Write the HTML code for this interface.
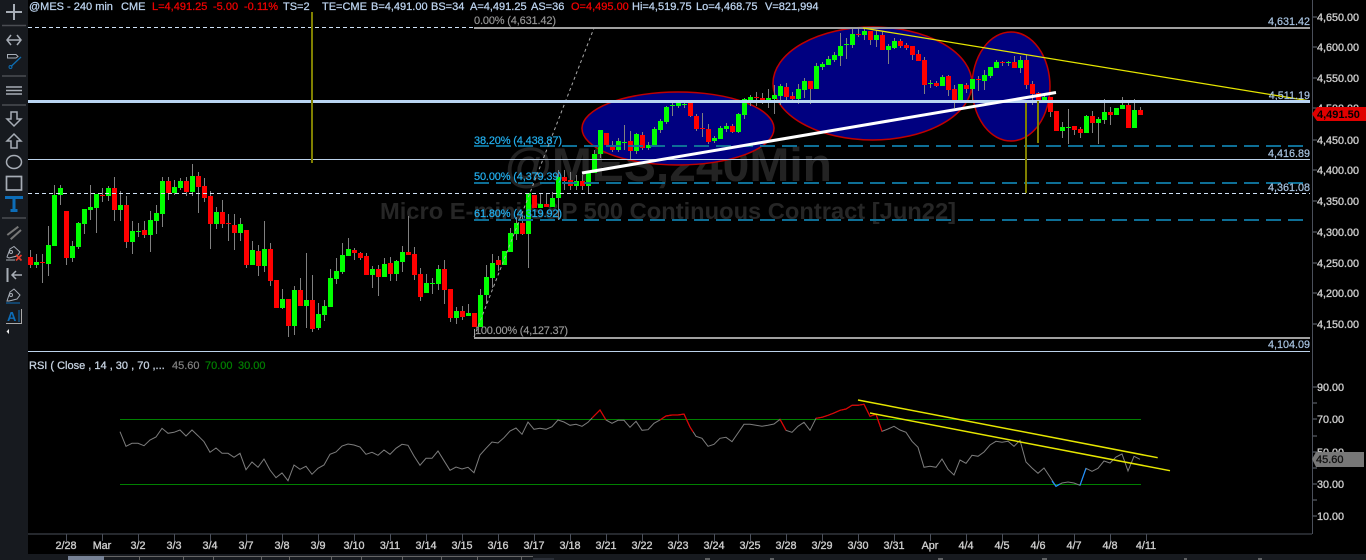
<!DOCTYPE html>
<html><head><meta charset="utf-8"><style>
html,body{margin:0;padding:0;background:#000;width:1366px;height:560px;overflow:hidden}
svg{display:block;font-family:"Liberation Sans",sans-serif;font-size:11px}
.h{fill:#bcd3ee;stroke:#bcd3ee;stroke-width:.25px}.r{fill:#f00000;stroke:#f00000;stroke-width:.25px}
.ax{fill:#cccccc;stroke:#cccccc;stroke-width:.35px;font-size:10.8px}
.lv{fill:#a8c4e2;stroke:#a8c4e2;stroke-width:.2px;font-size:10.8px;text-anchor:end}
.fb{fill:#22b0f0;stroke:#22b0f0;stroke-width:.2px}.fg{fill:#999;stroke:#999;stroke-width:.15px}
.dt{fill:#cccccc;stroke:#cccccc;stroke-width:.35px;text-anchor:middle;font-size:10.8px}
</style></head><body>
<svg width="1366" height="560" viewBox="0 0 1366 560" xmlns="http://www.w3.org/2000/svg">
<rect width="1366" height="560" fill="#000"/>
<rect width="28" height="560" fill="#171a1f"/>
<rect y="554" width="1366" height="6" fill="#171a1f"/>

<!-- watermark -->
<text x="505" y="181" font-size="47" font-weight="bold" fill="#232323" textLength="327" lengthAdjust="spacingAndGlyphs">@MES,240Min</text>
<text x="380" y="219" font-size="23" font-weight="bold" fill="#262626" textLength="576" lengthAdjust="spacingAndGlyphs">Micro E-mini S&amp;P 500 Continuous Contract [Jun22]</text>

<!-- ellipses -->
<g fill="#000080" stroke="#c00000" stroke-width="1.5">
<ellipse cx="678" cy="128.5" rx="96" ry="36.5"/>
<ellipse cx="872.5" cy="83.5" rx="99.5" ry="56.5"/>
<ellipse cx="1011" cy="86.5" rx="39" ry="54.5"/>
</g>

<!-- wicks -->
<path fill="none" stroke="#808080" stroke-width="1" d="M30.5 250V268M36.5 254V268M42.5 254V283M48.5 226V276M54.5 185V246M60.5 185V205M66.5 211V265M72.5 241V262M78.5 222V249M84.5 209V234M90.5 185V220M96.5 194V233M102.5 188V202M108.5 186V201M114.5 177V221M120.5 191V221M126.5 196V248M132.5 221V254M138.5 223V237M144.5 221V238M150.5 211V252M156.5 205V234M162.5 177V227M168.5 177V200M174.5 180V195M180.5 178V190M186.5 177V196M192.5 164V196M198.5 172V213M204.5 178V202M210.5 191V249M216.5 207V229M222.5 200V228M228.5 214V241M234.5 214V250M240.5 218V241M246.5 230V268M252.5 241V265M258.5 245V276M264.5 221V272M270.5 243V286M276.5 280V308M282.5 289V309M288.5 299V337M294.5 286V335M300.5 278V306M306.5 253V328M312.5 275V332M318.5 303V330M324.5 300V321M330.5 269V307M336.5 258V284M342.5 243V274M348.5 238V256M354.5 248V260M360.5 252V260M366.5 253V275M372.5 266V288M378.5 265V296M384.5 258V277M390.5 257V281M396.5 260V281M402.5 246V272M408.5 216V255M414.5 247V280M420.5 268V301M426.5 274V293M432.5 278V294M438.5 265V290M444.5 260V304M450.5 289V322M456.5 307V324M462.5 306V320M468.5 304V316M474.5 313V327M480.5 289V327M486.5 265V304M492.5 254V288M498.5 256V271M504.5 251V265M510.5 228V252M516.5 217V240M522.5 215V235M528.5 193V268M534.5 195V208M540.5 194V208M546.5 194V207M552.5 192V207M558.5 170V220M564.5 170V190M570.5 172V190M576.5 175V190M582.5 175V190M588.5 171V193M594.5 150V173M600.5 130V158M606.5 133V147M612.5 141V152M618.5 138V152M624.5 125V150M630.5 131V160M636.5 133V154M642.5 132V150M648.5 142V150M654.5 127V146M660.5 119V133M666.5 106V124M672.5 102V116M678.5 101V108M684.5 100V108M690.5 100V117M696.5 114V131M702.5 113V137M708.5 124V144M714.5 136V143M720.5 126V139M726.5 123V132M732.5 124V133M738.5 113V133M744.5 98V119M750.5 95V106M756.5 92V106M762.5 93V104M768.5 89V108M774.5 85V114M780.5 84V105M786.5 83V101M792.5 92V100M798.5 84V104M804.5 78V98M810.5 81V104M816.5 63V89M822.5 62V70M828.5 56V65M834.5 52V62M840.5 33V66M846.5 38V59M852.5 29V48M858.5 29V37M864.5 28V40M870.5 31V45M876.5 30V47M882.5 32V50M888.5 44V64M894.5 38V49M900.5 39V48M906.5 43V50M912.5 46V60M918.5 50V61M924.5 57V94M930.5 80V88M936.5 81V87M942.5 75V86M948.5 75V96M954.5 85V108M960.5 84V100M966.5 83V93M972.5 79V100M978.5 76V91M984.5 70V90M990.5 67V78M996.5 60V68M1002.5 61V66M1008.5 61V66M1014.5 56V68M1020.5 56V73M1026.5 55V89M1032.5 81V105M1038.5 92V103M1044.5 94V102M1050.5 97V117M1056.5 111V131M1062.5 122V138M1068.5 109V144M1074.5 126V135M1080.5 127V138M1086.5 115V133M1092.5 111V133M1098.5 117V144M1104.5 99V124M1110.5 107V125M1116.5 108V115M1122.5 97V109M1128.5 103V128M1134.5 99V128M1140.5 107V115"/>

<!-- green bodies -->
<path fill="#00ff00" d="M34 262h5v3h-5zM46 245h5v19h-5zM52 195h5v51h-5zM58 188h5v7h-5zM70 246h5v12h-5zM76 223h5v24h-5zM82 209h5v15h-5zM88 207h5v3h-5zM94 194h5v14h-5zM106 188h5v8h-5zM118 205h5v5h-5zM130 231h5v11h-5zM136 231h5v1h-5zM148 220h5v15h-5zM154 213h5v8h-5zM160 181h5v33h-5zM172 187h5v6h-5zM178 181h5v7h-5zM190 176h5v16h-5zM214 212h5v12h-5zM238 224h5v9h-5zM250 250h5v15h-5zM262 249h5v17h-5zM280 299h5v9h-5zM292 290h5v36h-5zM304 300h5v6h-5zM316 314h5v14h-5zM322 306h5v9h-5zM328 278h5v29h-5zM334 271h5v8h-5zM340 255h5v17h-5zM346 249h5v7h-5zM370 269h5v6h-5zM382 264h5v13h-5zM394 261h5v13h-5zM400 252h5v10h-5zM424 283h5v10h-5zM430 283h5v1h-5zM436 269h5v15h-5zM454 311h5v7h-5zM466 313h5v3h-5zM478 295h5v32h-5zM484 277h5v18h-5zM490 263h5v15h-5zM502 251h5v14h-5zM508 233h5v19h-5zM514 223h5v11h-5zM526 193h5v41h-5zM538 204h5v4h-5zM550 198h5v9h-5zM556 177h5v21h-5zM574 181h5v5h-5zM586 173h5v13h-5zM592 154h5v19h-5zM598 130h5v24h-5zM616 141h5v9h-5zM622 142h5v1h-5zM634 134h5v17h-5zM646 145h5v3h-5zM652 129h5v17h-5zM658 121h5v9h-5zM664 107h5v15h-5zM670 105h5v1h-5zM676 103h5v3h-5zM682 104h5v1h-5zM712 138h5v3h-5zM718 128h5v11h-5zM724 126h5v3h-5zM736 114h5v18h-5zM742 99h5v16h-5zM748 97h5v3h-5zM766 98h5v2h-5zM772 95h5v4h-5zM778 86h5v10h-5zM796 89h5v10h-5zM802 81h5v9h-5zM814 66h5v23h-5zM820 64h5v3h-5zM826 59h5v6h-5zM832 55h5v5h-5zM838 46h5v10h-5zM844 44h5v1h-5zM850 34h5v11h-5zM862 31h5v4h-5zM874 35h5v5h-5zM886 46h5v4h-5zM892 41h5v7h-5zM928 83h5v1h-5zM940 77h5v9h-5zM958 84h5v16h-5zM970 79h5v10h-5zM982 75h5v6h-5zM988 67h5v9h-5zM994 62h5v6h-5zM1006 62h5v1h-5zM1018 60h5v8h-5zM1042 97h5v3h-5zM1060 127h5v4h-5zM1066 127h5v1h-5zM1084 116h5v17h-5zM1096 119h5v4h-5zM1102 112h5v8h-5zM1114 108h5v7h-5zM1120 105h5v4h-5zM1132 110h5v18h-5z"/>
<!-- red bodies -->
<path fill="#ff0000" d="M28 257h5v8h-5zM40 262h5v1h-5zM64 211h5v47h-5zM100 195h5v1h-5zM112 188h5v22h-5zM124 205h5v37h-5zM142 230h5v5h-5zM166 181h5v12h-5zM184 181h5v11h-5zM196 176h5v11h-5zM202 186h5v12h-5zM208 196h5v28h-5zM220 212h5v12h-5zM226 223h5v1h-5zM232 225h5v8h-5zM244 230h5v35h-5zM256 251h5v15h-5zM268 249h5v32h-5zM274 280h5v28h-5zM286 299h5v27h-5zM298 290h5v16h-5zM310 300h5v29h-5zM352 250h5v3h-5zM358 253h5v5h-5zM364 256h5v19h-5zM376 269h5v8h-5zM388 263h5v11h-5zM406 252h5v3h-5zM412 254h5v21h-5zM418 274h5v23h-5zM442 269h5v21h-5zM448 289h5v29h-5zM460 311h5v6h-5zM472 313h5v14h-5zM496 260h5v5h-5zM520 223h5v11h-5zM532 195h5v13h-5zM544 204h5v3h-5zM562 177h5v4h-5zM568 180h5v6h-5zM580 181h5v5h-5zM604 133h5v12h-5zM610 146h5v4h-5zM628 141h5v10h-5zM640 135h5v13h-5zM688 103h5v13h-5zM694 116h5v13h-5zM700 128h5v1h-5zM706 129h5v13h-5zM730 126h5v6h-5zM754 97h5v1h-5zM760 98h5v2h-5zM784 87h5v10h-5zM790 96h5v3h-5zM808 81h5v8h-5zM856 34h5v1h-5zM868 31h5v9h-5zM880 35h5v15h-5zM898 41h5v5h-5zM904 45h5v3h-5zM910 46h5v9h-5zM916 54h5v7h-5zM922 60h5v25h-5zM934 83h5v3h-5zM946 76h5v14h-5zM952 89h5v12h-5zM964 85h5v4h-5zM976 79h5v1h-5zM1000 62h5v1h-5zM1012 62h5v6h-5zM1024 60h5v25h-5zM1030 84h5v10h-5zM1036 93h5v7h-5zM1048 97h5v15h-5zM1054 111h5v20h-5zM1072 126h5v4h-5zM1078 129h5v4h-5zM1090 116h5v7h-5zM1108 112h5v3h-5zM1126 105h5v23h-5zM1138 110h5v5h-5z"/>

<!-- horizontal levels -->
<path d="M28 27.5H474M28 193.5H1310" stroke="#cfe2f7" stroke-width="1" stroke-dasharray="4 3" fill="none"/>
<path d="M28 159.5H1310M28 351.5H1310" stroke="#bcd2ea" stroke-width="1" fill="none"/>
<rect x="474" y="27" width="836" height="2" fill="#a0a0a0"/>
<rect x="474" y="337" width="836" height="2" fill="#a0a0a0"/>
<rect x="474" y="329" width="1" height="9" fill="#a0a0a0"/>
<path d="M474 146H1306M474 183H1306M474 220H1306" stroke="#0e6f96" stroke-width="2" stroke-dasharray="15 7" fill="none"/>
<path d="M474 337L594 28" stroke="#aaa" stroke-width="1" stroke-dasharray="3 3" fill="none"/>
<path d="M863 28L1310 101" stroke="#e6e600" stroke-width="1.3" fill="none"/>
<rect x="28" y="100" width="1282" height="3" fill="#b9d5f2"/>
<rect x="311" y="12" width="2" height="151" fill="#808000"/>
<rect x="1025" y="103" width="2" height="90" fill="#808000"/>
<rect x="1037" y="101" width="2" height="42" fill="#808000"/>
<path d="M582 173L1056 92.5" stroke="#fff" stroke-width="3" fill="none"/>

<!-- fib labels -->
<text x="474" y="24" class="fg" textLength="82">0.00% (4,631.42)</text>
<text x="474" y="144" class="fb" textLength="88">38.20% (4,438.87)</text>
<text x="474" y="180" class="fb" textLength="88">50.00% (4,379.39)</text>
<text x="474" y="217" class="fb" textLength="88">61.80% (4,319.92)</text>
<text x="475" y="334" class="fg" textLength="93">100.00% (4,127.37)</text>
<text x="1310" y="25" class="lv">4,631.42</text>
<text x="1310" y="99" class="lv">4,511.19</text>
<text x="1310" y="157" class="lv">4,416.89</text>
<text x="1310" y="191" class="lv">4,361.08</text>
<text x="1310" y="348" class="lv">4,104.09</text>

<!-- header -->
<g>
<text x="29" y="10" class="h">@MES - 240 min</text>
<text x="121" y="10" class="h">CME</text>
<text x="152" y="10" class="r">L=4,491.25</text>
<text x="213" y="10" class="r">-5.00</text>
<text x="244" y="10" class="r">-0.11%</text>
<text x="283" y="10" class="h">TS=2</text>
<text x="322" y="10" class="h">TE=CME</text>
<text x="371" y="10" class="h">B=4,491.00</text>
<text x="431" y="10" class="h">BS=34</text>
<text x="470" y="10" class="h">A=4,491.25</text>
<text x="531" y="10" class="h">AS=36</text>
<text x="571" y="10" class="r">O=4,495.00</text>
<text x="632" y="10" class="h">Hi=4,519.75</text>
<text x="696" y="10" class="h">Lo=4,468.75</text>
<text x="765" y="10" class="h">V=821,994</text>
</g>

<!-- price axis -->
<path d="M1312.5 0V534M1312 534H28" stroke="#4a4f5a" stroke-width="1" fill="none"/>
<path d="M1313 17h4M1313 47h4M1313 78h4M1313 108h4M1313 140h4M1313 170h4M1313 201h4M1313 232h4M1313 263h4M1313 293h4M1313 324h4M1313 387h4M1313 403h4M1313 419h4M1313 436h4M1313 452h4M1313 468h4M1313 484h4M1313 500h4M1313 516h4" stroke="#6a6f7a" fill="none"/>
<g class="ax">
<text x="1317" y="21">4,650.00</text><text x="1317" y="51">4,600.00</text><text x="1317" y="82">4,550.00</text><text x="1317" y="112">4,500.00</text><text x="1317" y="144">4,450.00</text><text x="1317" y="174">4,400.00</text><text x="1317" y="205">4,350.00</text><text x="1317" y="236">4,300.00</text><text x="1317" y="267">4,250.00</text><text x="1317" y="297">4,200.00</text><text x="1317" y="328">4,150.00</text>
<text x="1317" y="391">90.00</text><text x="1317" y="423">70.00</text><text x="1317" y="456">50.00</text><text x="1317" y="488">30.00</text><text x="1317" y="520">10.00</text>
</g>
<path d="M1312 114L1317 107H1366V121H1317Z" fill="#e00000"/>
<text x="1317" y="118" fill="#000" font-weight="bold" font-size="11">4,491.50</text>
<path d="M1312 459L1316 452H1364V467H1316Z" fill="#777"/>
<text x="1316" y="463" fill="#111" font-size="11" stroke="#111" stroke-width=".3">45.60</text>

<!-- RSI -->
<text x="29" y="369" fill="#c4d0de" stroke="#c4d0de" stroke-width=".3">RSI ( Close , 14 , 30 , 70 ,...</text>
<text x="172" y="369" fill="#808080" stroke="#808080" stroke-width=".2">45.60</text>
<text x="205" y="369" fill="#008000" stroke="#008000" stroke-width=".2">70.00</text>
<text x="238" y="369" fill="#008000" stroke="#008000" stroke-width=".2">30.00</text>
<path d="M120 419.5H1141M120 484.5H1141" stroke="#008000" stroke-width="1" fill="none"/>
<polyline fill="none" stroke="#7d7d7d" stroke-width="1" points="120,431.7 126,446.3 132,443.3 138,443.3 144,445.7 150,440 156,437 162,428.3 168,433.3 174,432.3 180,430 186,436 192,430 198,435.7 204,441.7 210,452.3 216,448 222,453.3 228,453.3 234,457.3 240,453.3 246,469.7 252,462 258,467.3 264,459 270,470 276,477.7 282,473 288,480.7 294,465 300,469.3 306,466.3 312,474.3 318,468.3 324,465 330,454.3 336,452 342,446 348,444 354,445 360,447 366,454.3 372,452.3 378,455.3 384,450 390,454.3 396,448.3 402,444.3 408,445.3 414,456 420,465.3 426,458.3 432,458.3 438,451 444,460.7 450,470.3 456,467 462,469 468,467.3 474,472.7 480,455 486,448.3 492,442 498,443 504,437.7 510,431 516,428 522,434.3 528,422 534,429.3 540,428.3 546,429.3 552,426.7 558,420 564,422 570,425.3 576,424.3 582,426.3 588,422.3 594,416 600,410 606,420 612,423.3 618,420.3 624,420.3 630,427.3 636,421.3 642,430.3 648,429.7 654,423.3 660,420 666,416 672,415 678,415 684,414 690,427 696,436.3 702,438.3 708,446.3 714,444.3 720,438.3 726,437.3 732,441.7 738,433 744,424.3 750,424.3 756,425.3 762,426.3 768,425.3 774,424 780,419.3 786,430.3 792,432.3 798,426.3 804,422.3 810,430.3 816,418.3 822,417.3 828,415.3 834,413 840,410.3 846,409 852,405.3 858,405.3 864,404.3 870,416.3 876,414.3 882,431.3 888,429 894,426.3 900,430 906,432.3 912,441.3 918,447.3 924,467.3 930,466.3 936,467.3 942,459 948,469.3 954,475 960,460 966,463.3 972,455.3 978,456.3 984,452 990,445 996,441.3 1002,442.3 1008,441.3 1014,446.3 1020,440.3 1026,462 1032,468 1038,473.3 1044,468 1050,477 1056,486.3 1062,483 1068,482 1074,483 1080,485.3 1086,468.3 1092,471.3 1098,468.3 1104,461 1110,463 1116,457 1122,454 1128,471 1134,456.3 1140,459.3"/>
<path fill="none" stroke="#e00000" stroke-width="1.2" d="M592 418L594 416 600 410 606 420M660 420L666 416 672 415 678 415 684 414 690 427 693 432M780 419.3L786 430.3M816 418.3L822 417.3 828 415.3 834 413 840 410.3 846 409 852 405.3 858 405.3 864 404.3 870 416.3 876 414.3 882 431.3"/>
<path fill="none" stroke="#1e90ff" stroke-width="1.2" d="M1052 481L1056 486.3 1060 484M1080 485.3L1086 468.3"/>
<path fill="none" stroke="#e6e600" stroke-width="1.5" d="M858 400L1157.7 457.7M870 413L1170 470.7"/>

<!-- date axis -->
<path d="M66.5 534v7M102.5 534v7M138.5 534v7M174.5 534v7M210.5 534v7M246.5 534v7M282.5 534v7M318.5 534v7M354.5 534v7M390.5 534v7M426.5 534v7M462.5 534v7M498.5 534v7M534.5 534v7M570.5 534v7M606.5 534v7M642.5 534v7M678.5 534v7M714.5 534v7M750.5 534v7M786.5 534v7M822.5 534v7M858.5 534v7M894.5 534v7M930.5 534v7M966.5 534v7M1002.5 534v7M1038.5 534v7M1074.5 534v7M1110.5 534v7M1146.5 534v7" stroke="#4a4f5a" fill="none"/>
<g class="dt">
<text x="66" y="549">2/28</text><text x="102" y="549">Mar</text><text x="138" y="549">3/2</text><text x="174" y="549">3/3</text><text x="210" y="549">3/4</text><text x="246" y="549">3/7</text><text x="282" y="549">3/8</text><text x="318" y="549">3/9</text><text x="354" y="549">3/10</text><text x="390" y="549">3/11</text><text x="426" y="549">3/14</text><text x="462" y="549">3/15</text><text x="498" y="549">3/16</text><text x="534" y="549">3/17</text><text x="570" y="549">3/18</text><text x="606" y="549">3/21</text><text x="642" y="549">3/22</text><text x="678" y="549">3/23</text><text x="714" y="549">3/24</text><text x="750" y="549">3/25</text><text x="786" y="549">3/28</text><text x="822" y="549">3/29</text><text x="858" y="549">3/30</text><text x="894" y="549">3/31</text><text x="930" y="549">Apr</text><text x="966" y="549">4/4</text><text x="1002" y="549">4/5</text><text x="1038" y="549">4/6</text><text x="1074" y="549">4/7</text><text x="1110" y="549">4/8</text><text x="1146" y="549">4/11</text>
</g>

<!-- bottom strip -->
<rect x="68" y="556" width="36" height="4" fill="#778296"/>
<rect x="104" y="556" width="429" height="1" fill="#666"/>
<path d="M139.5 557v3M183.5 557v3M213.5 557v3M261.5 557v3M289.5 557v3M331.5 557v3M361.5 557v3M402.5 557v3M441.5 557v3M477.5 557v3M521.5 557v3" stroke="#666" fill="none"/>
<rect x="533" y="558" width="21" height="2" fill="#2a2e36"/>
<path d="M705 559h5M770 559h4M938 559h5M1042 559h5M1184 559h3M1258 559h4" stroke="#aaa" fill="none"/>

<!-- toolbar -->
<g fill="none" stroke="#a7adb6" stroke-width="2">
<path d="M6 12H22M14 4V20" stroke-width="2"/>
<path d="M2 25.5H26M2 76H26M2 105H26M2 218H26" stroke="#4a4d52" stroke-width="1.5"/>
<path d="M7 40H21M11 35L7 40 11 45M17 35L21 40 17 45" stroke-width="1.5"/>
<path d="M7.5 54.5H16L18 56.5 16 58H7.5Z" stroke-width="1"/>
<path d="M11 66.5L21 57" stroke="#0e6cb0" stroke-width="1.3"/>
<circle cx="10.5" cy="67" r="1.5" stroke="#0e6cb0" stroke-width="1"/>
<path d="M6 87H22M6 90.5H22M6 94H22" stroke-width="1.5"/>
<path d="M11 112H17V119H21L14 126 7 119H11Z" stroke-width="1.5"/>
<path d="M11 148H17V141H21L14 134 7 141H11Z" stroke-width="1.5"/>
<ellipse cx="14" cy="162" rx="7.5" ry="6.5" stroke-width="1.5"/>
<rect x="6.5" y="176.5" width="15" height="13.5" stroke-width="1.7"/>
<path d="M6.5 199V197.5H21.5V199M14 197.5V210M10.5 210.5H17.5" stroke="#0d6db8" stroke-width="3"/>
<path d="M7.3 235L18.3 226.7M10.7 239.3L21 230" stroke="#777" stroke-width="2"/>
<path d="M7 257L10 249 14 246.5 20 252 17 256 9 258ZM6 260H15" stroke-width="1"/>
<circle cx="11" cy="252" r="1.5" stroke-width="1"/>
<path d="M16 255L21.5 260.5M21.5 255L16 260.5" stroke="#e03a2a" stroke-width="1.7"/>
<path d="M7.5 268V282" stroke-width="2"/>
<path d="M12 275H22M16 271L12 275 16 279" stroke-width="1.5"/>
<path d="M7 301L10 292 14 289 20 295 17 299 9 301Z" stroke-width="1"/>
<circle cx="11" cy="295" r="1.5" stroke-width="1"/>
<path d="M6 303H20" stroke="#0d6db8" stroke-width="1"/>
<path d="M21.5 309V323.5H6" stroke-width="1" stroke="#aaa"/>
<path d="M19 310V322" stroke="#0d6db8" stroke-width="1"/>
</g>
<text x="7" y="321" font-size="13" font-weight="bold" fill="#0d6db8">A</text>
<path d="M6.5 331.5L9 329V334Z" fill="#eee"/>
</svg>
</body></html>
